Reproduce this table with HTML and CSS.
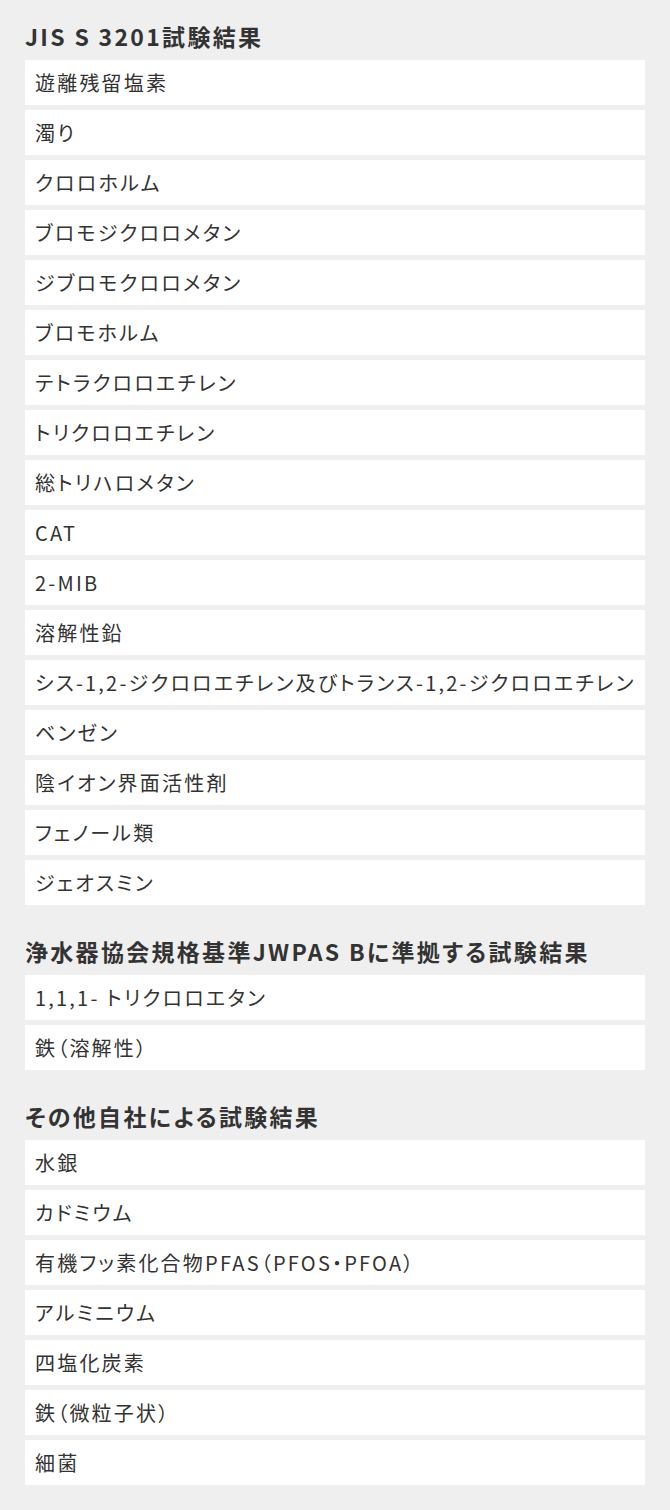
FILE: index.html
```html
<!DOCTYPE html>
<html lang="ja">
<head>
<meta charset="utf-8">
<title>試験結果</title>
<link rel="stylesheet" href="styles.css">
</head>
<body>
<main class="page">
  <section class="section">
    <h2 class="heading">JIS S 3201試験結果</h2>
    <ul class="list">
      <li class="item">遊離残留塩素</li>
      <li class="item">濁り</li>
      <li class="item">クロロホルム</li>
      <li class="item">ブロモジクロロメタン</li>
      <li class="item">ジブロモクロロメタン</li>
      <li class="item">ブロモホルム</li>
      <li class="item">テトラクロロエチレン</li>
      <li class="item">トリクロロエチレン</li>
      <li class="item">総トリハロメタン</li>
      <li class="item">CAT</li>
      <li class="item">2-MIB</li>
      <li class="item">溶解性鉛</li>
      <li class="item">シス-1,2-ジクロロエチレン及びトランス-1,2-ジクロロエチレン</li>
      <li class="item">ベンゼン</li>
      <li class="item">陰イオン界面活性剤</li>
      <li class="item">フェノール類</li>
      <li class="item">ジェオスミン</li>
    </ul>
  </section>
  <section class="section">
    <h2 class="heading">浄水器協会規格基準JWPAS Bに準拠する試験結果</h2>
    <ul class="list">
      <li class="item">1,1,1- トリクロロエタン</li>
      <li class="item">鉄（溶解性）</li>
    </ul>
  </section>
  <section class="section">
    <h2 class="heading">その他自社による試験結果</h2>
    <ul class="list">
      <li class="item">水銀</li>
      <li class="item">カドミウム</li>
      <li class="item">有機フッ素化合物PFAS（PFOS・PFOA）</li>
      <li class="item">アルミニウム</li>
      <li class="item">四塩化炭素</li>
      <li class="item">鉄（微粒子状）</li>
      <li class="item">細菌</li>
    </ul>
  </section>
</main>
</body>
</html>
```

FILE: styles.css
```css
* { box-sizing: border-box; }
html, body {
  margin: 0;
  padding: 0;
  background: #efefef;
}
body {
  font-family: "Noto Sans CJK JP", "Noto Sans", sans-serif;
  color: #333333;
}
.page {
  display: flex;
  flex-direction: column;
  gap: 30px;
  padding: 20px 25px 25px 25px;
}
.section {
  display: flex;
  flex-direction: column;
  gap: 8px;
}
.heading {
  margin: 0;
  font-size: 23px;
  line-height: 32px;
  font-weight: 700;
  letter-spacing: 0.1em;
  color: #333333;
  font-feature-settings: "palt";
}
.list {
  list-style: none;
  margin: 0;
  padding: 0;
  display: flex;
  flex-direction: column;
  gap: 5px;
}
.item {
  background: #ffffff;
  height: 45px;
  line-height: 45px;
  padding-left: 10px;
  font-size: 20px;
  letter-spacing: 0.11em;
  white-space: nowrap;
  color: #333333;
  font-feature-settings: "palt";
}
```
